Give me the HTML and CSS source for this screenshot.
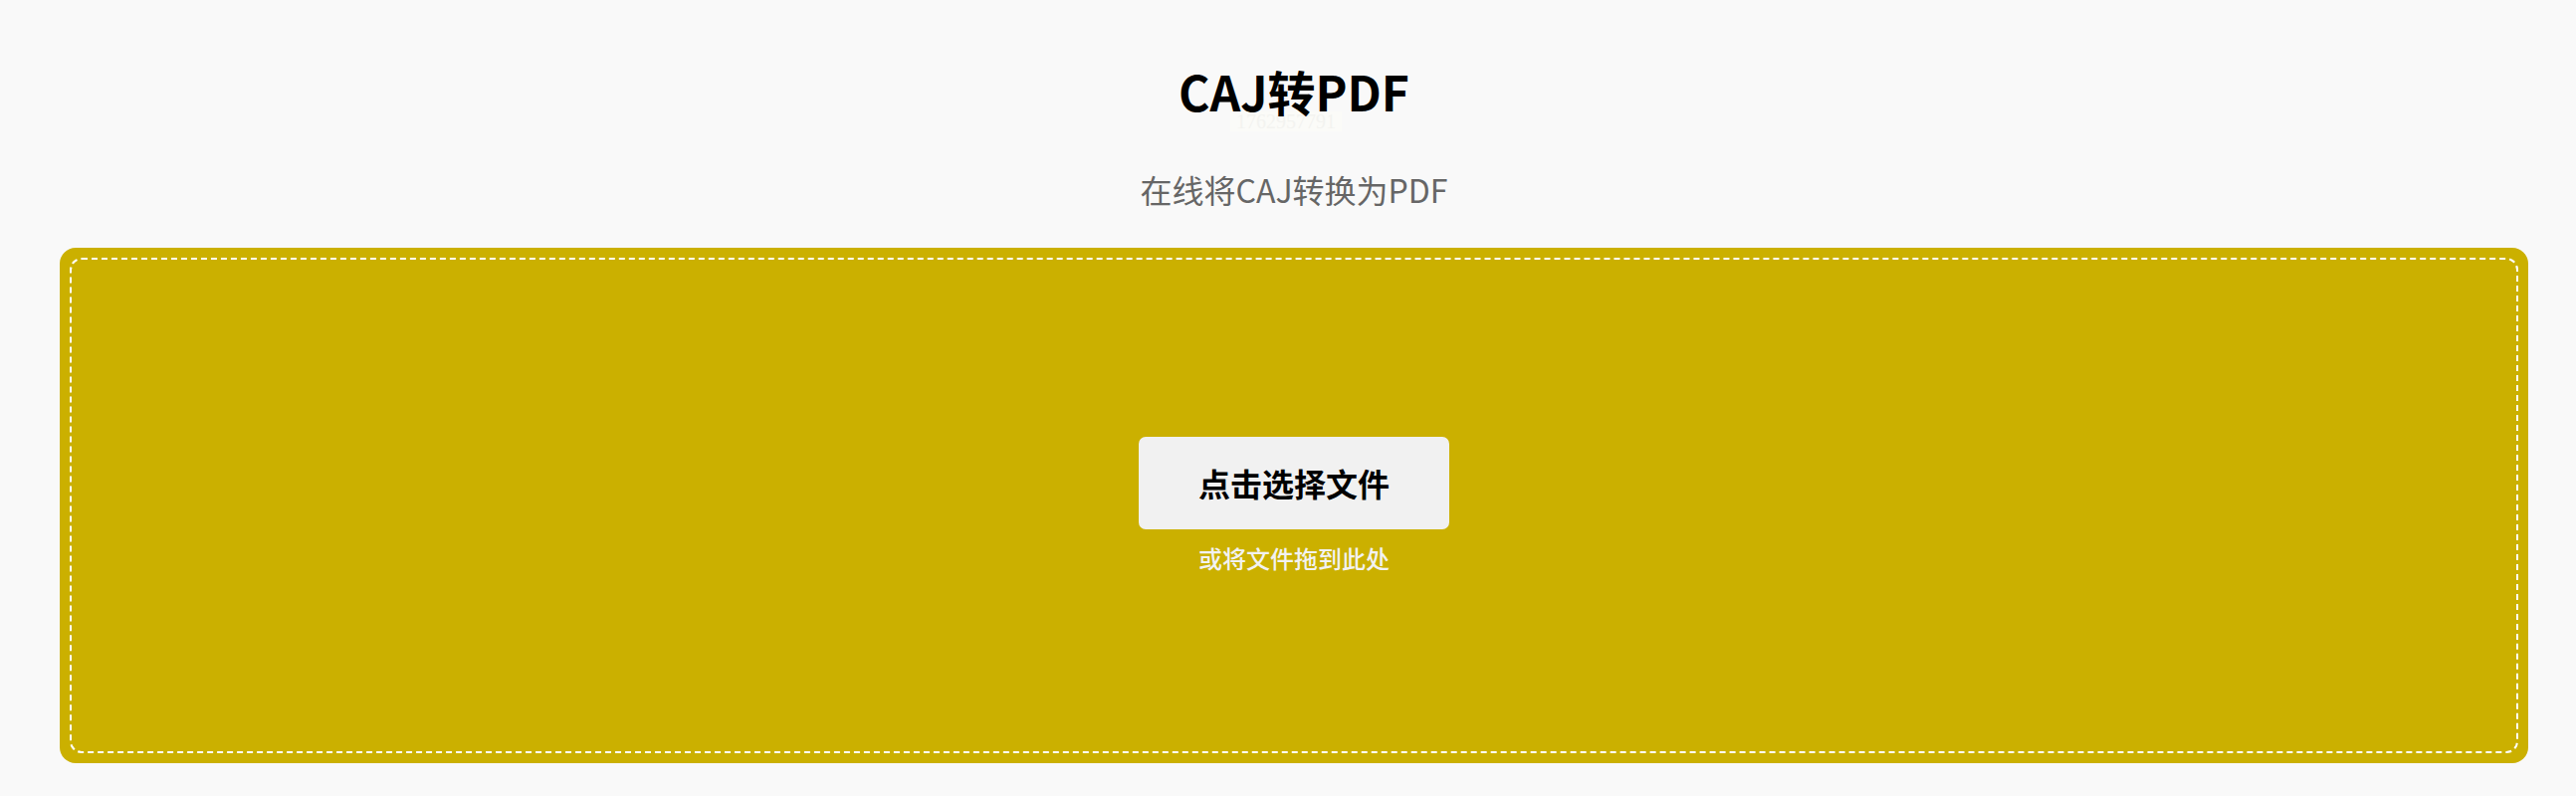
FILE: index.html
```html
<!DOCTYPE html>
<html lang="zh-CN">
<head>
<meta charset="utf-8">
<title>CAJ转PDF</title>
<link rel="stylesheet" href="styles.css">
</head>
<body>
<main class="page">
  <header class="head">
    <h1 class="title">CAJ转PDF</h1>
    <div class="stamp">1762957791</div>
    <p class="subtitle">在线将CAJ转换为PDF</p>
  </header>
  <section class="drop">
    <div class="drop-inner">
      <button class="pick" type="button">点击选择文件</button>
      <div class="hint">或将文件拖到此处</div>
    </div>
  </section>
</main>
</body>
</html>
```
FILE: styles.css
```css
html, body {
  margin: 0;
  padding: 0;
  background: #f9f9f9;
}
body {
  font-family: "Noto Sans CJK SC", "Noto Sans", sans-serif;
  color: #000;
}
.page {
  padding: 0 48px 0 60px;
}
.head {
  display: flex;
  flex-direction: column;
  align-items: center;
  padding-top: 67px;
  position: relative;
}
.title {
  position: relative;
  z-index: 1;
  margin: 0;
  font-size: 48px;
  font-weight: 700;
  line-height: 48px;
}
.stamp {
  position: absolute;
  top: 112px;
  left: 50%;
  transform: translateX(-64px);
  font-family: "Liberation Serif", serif;
  font-size: 20px;
  line-height: 20px;
  color: #f3f3f0;
  background: #fbfbf8;
  padding: 0 6px;
}
.subtitle {
  margin: 53px 0 0;
  font-size: 32px;
  line-height: 44px;
  color: #666;
}
.drop {
  margin-top: 37px;
  height: 518px;
  background: #cbb000;
  border-radius: 16px;
  padding: 10px;
  box-sizing: border-box;
  display: flex;
}
.drop-inner {
  flex: 1;
  border: 2px dashed #fff;
  border-radius: 12px;
  display: flex;
  flex-direction: column;
  align-items: center;
  justify-content: center;
}
.pick {
  width: 312px;
  height: 93px;
  border: 0;
  border-radius: 7px;
  background: #f1f1f1;
  font-family: "Noto Sans CJK SC", sans-serif;
  font-size: 32px;
  font-weight: 700;
  color: #000;
}
.hint {
  margin-top: 12px;
  font-size: 24px;
  line-height: 34px;
  font-weight: 500;
  color: #f2f2f2;
}
```
